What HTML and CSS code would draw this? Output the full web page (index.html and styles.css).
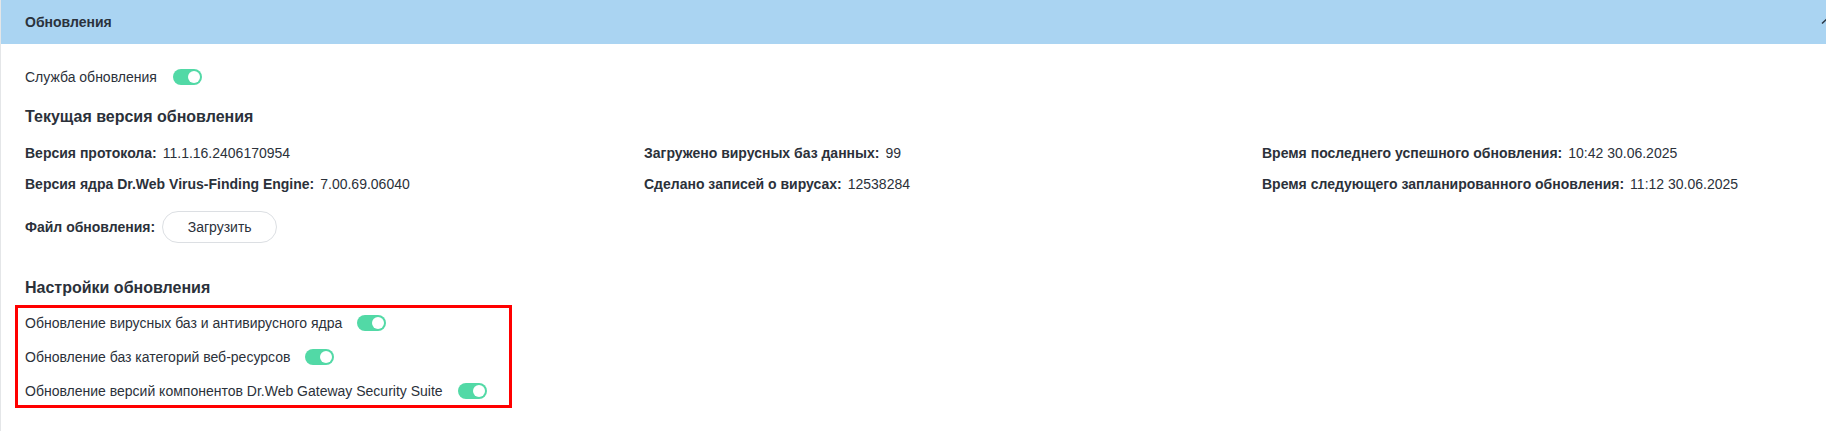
FILE: index.html
```html
<!DOCTYPE html>
<html lang="ru">
<head>
<meta charset="utf-8">
<title>Обновления</title>
<link rel="stylesheet" href="styles.css">
</head>
<body>
<div class="panel">
  <div class="panel-header">
    <span class="panel-title">Обновления</span>
    <svg class="chevron" width="12" height="8" viewBox="0 0 12 8"><path d="M1 6.5 L6 1.8 L11 6.5" fill="none" stroke="#2d3a48" stroke-width="1.6"/></svg>
  </div>
  <div class="panel-body">
    <div class="switch-row service">
      <span>Служба обновления</span>
      <span class="toggle"><span class="knob"></span></span>
    </div>

    <h3 class="section-title first">Текущая версия обновления</h3>
    <div class="info-grid">
      <div class="info"><b>Версия протокола:</b><span>11.1.16.2406170954</span></div>
      <div class="info"><b>Загружено вирусных баз данных:</b><span>99</span></div>
      <div class="info"><b>Время последнего успешного обновления:</b><span>10:42 30.06.2025</span></div>
      <div class="info"><b>Версия ядра Dr.Web Virus-Finding Engine:</b><span>7.00.69.06040</span></div>
      <div class="info"><b>Сделано записей о вирусах:</b><span>12538284</span></div>
      <div class="info"><b>Время следующего запланированного обновления:</b><span>11:12 30.06.2025</span></div>
    </div>
    <div class="file-row">
      <b>Файл обновления:</b>
      <button class="upload-btn" type="button">Загрузить</button>
    </div>

    <h3 class="section-title second">Настройки обновления</h3>
    <div class="highlight">
      <div class="switch-row"><span>Обновление вирусных баз и антивирусного ядра</span><span class="toggle"><span class="knob"></span></span></div>
      <div class="switch-row"><span>Обновление баз категорий веб-ресурсов</span><span class="toggle"><span class="knob"></span></span></div>
      <div class="switch-row"><span>Обновление версий компонентов Dr.Web Gateway Security Suite</span><span class="toggle"><span class="knob"></span></span></div>
    </div>
  </div>
</div>
</body>
</html>
```

FILE: styles.css
```css
html, body {
  margin: 0;
  padding: 0;
  background: #ffffff;
  overflow: hidden;
}
body {
  font-family: "Liberation Sans", Arial, sans-serif;
  font-size: 14px;
  color: #2b313a;
}
.panel {
  border-left: 1px solid #e4e6e8;
  min-height: 431px;
}
.panel-header {
  height: 44px;
  background: #aad4f2;
  display: flex;
  align-items: center;
  justify-content: space-between;
  padding-left: 24px;
}
.panel-title {
  font-weight: bold;
  font-size: 14px;
  color: #2a323c;
}
.chevron {
  margin-right: -7px;
  margin-top: -2px;
}
.panel-body {
  padding-left: 24px;
}
.switch-row {
  display: flex;
  align-items: center;
  gap: 15px;
  height: 20px;
  line-height: 20px;
}
.switch-row.service {
  margin-top: 23px;
  gap: 16px;
}
.toggle {
  width: 29px;
  height: 16px;
  border-radius: 8px;
  background: #52d9a6;
  display: flex;
  align-items: center;
  justify-content: flex-end;
  padding: 0 2px;
  box-sizing: border-box;
}
.knob {
  width: 12px;
  height: 12px;
  border-radius: 50%;
  background: #ffffff;
}
.section-title {
  margin: 0;
  font-size: 16px;
  line-height: 22px;
  font-weight: bold;
  color: #2b313a;
}
.section-title.first {
  margin-top: 19px;
}
.section-title.second {
  margin-top: 34px;
}
.info-grid {
  margin-top: 15px;
  display: grid;
  grid-template-columns: 619px 618px auto;
  row-gap: 11px;
}
.info {
  display: flex;
  gap: 6px;
  line-height: 20px;
  height: 20px;
  white-space: nowrap;
}
.info b {
  font-weight: bold;
}
.file-row {
  margin-top: 17px;
  display: flex;
  align-items: center;
  gap: 7px;
}
.upload-btn {
  width: 115px;
  height: 32px;
  border: 1px solid #dcdfe3;
  border-radius: 16px;
  background: #ffffff;
  font-family: "Liberation Sans", Arial, sans-serif;
  font-size: 14px;
  color: #2b313a;
  padding: 0;
}
.highlight {
  margin-top: 6px;
  margin-left: -10px;
  width: 497px;
  box-sizing: border-box;
  border: 3px solid #ff0000;
  padding: 5px 0 4px 7px;
  display: flex;
  flex-direction: column;
  gap: 14px;
}
```
